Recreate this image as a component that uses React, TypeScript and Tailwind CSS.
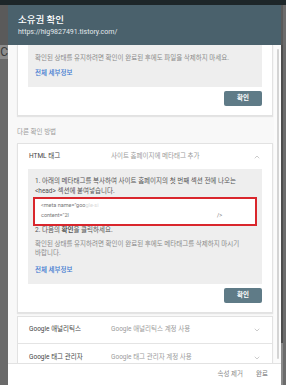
import { ChevronDown, ChevronUp } from "lucide-react";

const font = "font-['Roboto','Noto_Sans_CJK_KR',sans-serif]";

function Button() {
  return (
    <div className="flex justify-end pr-[10px]">
      <div className="w-[38px] h-[15px] bg-[#5f7b87] rounded-[2px] flex items-center justify-center text-white text-[6.5px] font-bold">
        확인
      </div>
    </div>
  );
}

function Row({ title, desc, last }: { title: string; desc: string; last?: boolean }) {
  return (
    <div className={"flex items-center h-[27px] pl-[11px] pr-[11px] shrink-0 " + (last ? "" : "border-b border-[#e4e4e4]")}>
      <div className="w-[82px] text-[6.5px] text-[#444]">{title}</div>
      <div className="flex-1 text-[6.5px] text-[#9a9a9a]">{desc}</div>
      <ChevronDown size={8} strokeWidth={1.5} className="text-[#999]" />
    </div>
  );
}

export default function App() {
  return (
    <div className={"w-[286px] h-[385px] flex flex-col overflow-hidden bg-[#616161] " + font}>
      <div className="h-[5px] bg-[#1d2629] shrink-0" />
      <div className="flex flex-1 min-h-0">
        {/* left page strip */}
        <div className="w-[8px] flex flex-col shrink-0">
          <div className="h-[40px] bg-[#5a5a5a]" />
          <div className="h-[14px] bg-[#8c8c8c] flex justify-end items-center overflow-hidden">
            <span className="text-[12px] leading-none text-[#3a3a3a] whitespace-nowrap">DOC</span>
          </div>
          <div className="flex-1 bg-[#6a6a6a]" />
        </div>

        {/* dialog */}
        <div className="w-[273px] flex flex-col bg-white shrink-0">
          <div className="h-[40px] bg-[#4a616c] px-[10px] pt-[9px] shrink-0">
            <div className="text-[9.5px] leading-[12px] font-medium text-white">소유권 확인</div>
            <div className="text-[7px] leading-[10px] text-[#e3e9ec] mt-[1px]">https://hig9827491.tistory.com/</div>
          </div>

          <div className="flex flex-1 min-h-0 overflow-hidden">
            <div className="flex-1 bg-[#f8f8f8] pl-[9px] pr-[1px] flex flex-col overflow-hidden">
              {/* first card, scrolled */}
              <div className="bg-white border border-t-0 border-[#e2e2e2] shadow-[0_1px_1px_rgba(0,0,0,0.08)] px-[10px] pb-[9px] shrink-0">
                <div className="bg-[#eeeeee] px-[7px] pt-[9px] pb-[9px]">
                  <div className="text-[6.5px] leading-[9px] text-[#8a8a8a]">
                    확인된 상태를 유지하려면 확인이 완료된 후에도 파일을 삭제하지 마세요.
                  </div>
                  <div className="text-[6.5px] leading-[9px] text-[#3b78d0] mt-[6px] font-medium">전체 세부정보</div>
                </div>
                <div className="mt-[4px] -mr-[10px]">
                  <Button />
                </div>
              </div>

              <div className="text-[6.5px] leading-[9px] text-[#9a9a9a] mt-[12px] mb-[6px] shrink-0">다른 확인 방법</div>

              {/* HTML tag card */}
              <div className="bg-white border border-[#e2e2e2] shadow-[0_1px_1px_rgba(0,0,0,0.08)] px-[10px] pb-[9px] shrink-0">
                <div className="flex items-center h-[25px] pl-[1px] pr-[1px]">
                  <div className="w-[82px] text-[6.5px] text-[#444]">HTML 태그</div>
                  <div className="flex-1 text-[6.5px] text-[#9a9a9a]">사이트 홈페이지에 메타태그 추가</div>
                  <ChevronUp size={8} strokeWidth={1.5} className="text-[#999]" />
                </div>
                <div className="bg-[#eeeeee] px-[5px] pt-[7px] pb-[9px]">
                  <div className="text-[6.5px] leading-[10px] text-[#555] px-[2px]">
                    1. 아래의 메타태그를 복사하여 사이트 홈페이지의 첫 번째 섹션 전에 나오는 &lt;head&gt; 섹션에 붙여넣습니다.
                  </div>
                  <div className="mt-[1px] border-2 border-[#d9262c] bg-white h-[29px] px-[6px] pt-[1px] flex flex-col">
                    <div className="text-[5.5px] leading-[10px] text-[#777] whitespace-nowrap">
                      &lt;meta name="goo<span className="text-[#d8d8d8]">gle-si</span>
                    </div>
                    <div className="flex text-[5.5px] leading-[10px] text-[#777]">
                      <span className="w-[176px]">content="2l</span>
                      <span>/&gt;</span>
                    </div>
                  </div>
                  <div className="text-[6.5px] leading-[9px] text-[#555] px-[2px]">
                    2. 다음의 <span className="font-bold">확인</span>을 클릭하세요.
                  </div>
                  <div className="text-[6.5px] leading-[9px] text-[#8a8a8a] px-[2px] mt-[5px]">
                    확인된 상태를 유지하려면 확인이 완료된 후에도 메타태그를 삭제하지 마시기
                    <br />
                    바랍니다.
                  </div>
                  <div className="text-[6.5px] leading-[9px] text-[#3b78d0] px-[2px] mt-[8px] font-medium">전체 세부정보</div>
                </div>
                <div className="mt-[4px] -mr-[10px]">
                  <Button />
                </div>
              </div>

              {/* other methods */}
              <div className="mt-[3px] bg-white border border-[#e2e2e2] flex flex-col shrink-0">
                <Row title="Google 애널리틱스" desc="Google 애널리틱스 계정 사용" />
                <Row title="Google 태그 관리자" desc="Google 태그 관리자 계정 사용" last />
              </div>
            </div>

            {/* scrollbar */}
            <div className="w-[7px] bg-[#fbfbfb] flex justify-center pt-[4px] pb-[4px] shrink-0">
              <div className="w-[2px] bg-[#d4d4d4] rounded-full" />
            </div>
          </div>

          <div className="h-[22px] border-t border-[#e2e2e2] bg-white flex items-center justify-end gap-[13px] pr-[13px] shrink-0">
            <span className="text-[6.5px] text-[#8a8a8a]">속성 제거</span>
            <span className="text-[6.5px] text-[#777]">완료</span>
          </div>
        </div>

        {/* right page strip */}
        <div className="flex-1 flex bg-[#727272]">
          <div className="w-[2px] flex flex-col">
            <div className="h-[40px] bg-[#5a5a5a]" />
            <div className="h-[298px] bg-[#4e4e4e]" />
            <div className="flex-1 bg-[#8a8a8a]" />
          </div>
          <div className="flex-1 bg-[#6c6c6c]" />
        </div>
      </div>
    </div>
  );
}
